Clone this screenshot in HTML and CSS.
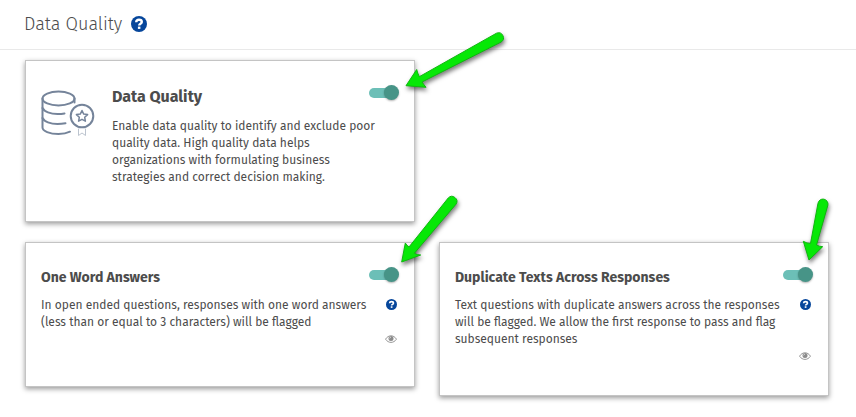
FILE: index.html
```
<!DOCTYPE html>
<html lang="en">
  <head>
    <meta charset="utf-8" />
    <title>Data Quality</title>
    <meta name="viewport" content="width=device-width, initial-scale=1.0" />
    <link rel="stylesheet" href="styles.css">
  </head>
  <body>
    <!-- shared icons -->
    <svg class="sprite" aria-hidden="true">
      <symbol id="help" viewBox="0 0 16 16">
        <circle cx="8" cy="8" r="8" fill="#06469b" />
        <path d="M5.200 6.200C5.300 4.500 6.500 3.800 8 3.800c1.600 0 2.800.8 2.800 2.200 0 1.900-2.600 1.700-2.600 3.500" fill="none" stroke="#fff" stroke-width="2.400" />
        <rect x="6.900" y="10.600" width="2.500" height="2.300" fill="#fff" />
      </symbol>
      <symbol id="eye" viewBox="0 0 12 8">
        <path d="M.5 4.200C2 1.900 3.900.8 6 .8s4 1.100 5.500 3.400C10 6.300 8.100 7.400 6 7.400S2 6.300.5 4.200z" fill="none" stroke="#8b8b8b" stroke-width=".9" />
        <circle cx="6" cy="3.600" r="2.500" fill="#8b8b8b" />
        <path d="M4.600 3.500c0-.8.6-1.400 1.400-1.400" fill="none" stroke="#fff" stroke-width=".6" />
      </symbol>
    </svg>

    <header class="page-header">
      <h1>Data Quality</h1>
      <button type="button" class="icon-btn" aria-label="Help">
        <svg width="16" height="16"><use href="#help" /></svg>
      </button>
    </header>

    <main class="cards">
      <section class="card card-main">
        <svg class="card-icon" width="54" height="48" viewBox="0 0 54 48" fill="none" stroke="#75849a" stroke-width="2" stroke-linecap="round">
          <ellipse cx="17.500" cy="8.500" rx="16" ry="7" />
          <path d="M1.500 8.500v29c0 3.500 7 6.500 16 6.500 4.500 0 8.500-.8 11.500-2.300" />
          <path d="M33.500 8.500v4" />
          <path d="M1.500 18c1.500 3.500 8 6 15 6 3 0 5-.2 7-.6" />
          <path d="M1.500 28c1.500 3.500 8 6 15 6 3 0 5.500-.3 8-.8" />
          <circle cx="41" cy="26" r="11.300" />
          <path d="M41 20.500l1.700 3.600 3.900.5-2.900 2.700.7 3.900-3.400-1.900-3.400 1.900.7-3.900-2.900-2.700 3.900-.5z" stroke-width="1.500" stroke-linejoin="round" />
          <path d="M37.500 39v6.500l3.500-2.500 3.500 2.500V39" stroke="#bcc4cf" stroke-width="1" />
        </svg>
        <div class="card-body">
          <h2><label for="dataQuality">Data Quality</label></h2>
          <p>
            Enable data quality to identify and exclude poor quality data. High
            quality data helps organizations with formulating business
            strategies and correct decision making.
          </p>
        </div>
        <input type="checkbox" class="toggle" id="dataQuality" checked />
        <svg class="arrow arrow-main" width="110" height="70" viewBox="0 0 110 70">
          <path d="M6 60.700L16.700 44.500Q17.500 48 19.300 51.700L96.500 8.200A5 5 0 0 1 101 17.100L22 57Q24 60 26 62.300Z" />
        </svg>
      </section>

      <section class="card">
        <h3><label for="oneWord">One Word Answers</label></h3>
        <input type="checkbox" class="toggle" id="oneWord" checked />
        <p>
          In open ended questions, responses with one word answers (less than
          or equal to 3 characters) will be flagged
        </p>
        <button type="button" class="icon-btn" aria-label="About one word answers">
          <svg width="11" height="11"><use href="#help" /></svg>
        </button>
        <button type="button" class="icon-btn preview" aria-label="Preview">
          <svg width="12" height="8"><use href="#eye" /></svg>
        </button>
        <svg class="arrow arrow-left" width="65" height="80" viewBox="0 0 65 80">
          <path d="M6.700 72L10.300 53Q12 55.500 14 57L53.200 8A5 5 0 0 1 61 14.200L19.300 63.300Q22 65 25.700 65Z" />
        </svg>
      </section>

      <section class="card">
        <h3><label for="duplicates">Duplicate Texts Across Responses</label></h3>
        <input type="checkbox" class="toggle" id="duplicates" checked />
        <p>
          Text questions with duplicate answers across the responses will be
          flagged. We allow the first response to pass and flag subsequent
          responses
        </p>
        <button type="button" class="icon-btn" aria-label="About duplicate texts">
          <svg width="11" height="11"><use href="#help" /></svg>
        </button>
        <button type="button" class="icon-btn preview" aria-label="Preview">
          <svg width="12" height="8"><use href="#eye" /></svg>
        </button>
        <svg class="arrow arrow-right" width="40" height="75" viewBox="0 0 40 75">
          <path d="M14 65L8.300 46.300Q12 48.500 15.500 48.500L23 8.200A5 5 0 0 1 32.900 10L21.500 50Q24 51.500 27.700 51.700Z" />
        </svg>
      </section>
    </main>
  </body>
</html>
```

FILE: styles.css
```
* {
  box-sizing: border-box;
}

body {
  font-family: "Fira Sans", Roboto, sans-serif;
  font-size: 12px;
  line-height: 17px;
  margin: 0;
  color: #4c4c4c;
  background-color: #fff;
}

h1,
h2,
h3,
p {
  margin: 0;
}

.sprite {
  position: absolute;
  width: 0;
  height: 0;
}

.page-header {
  display: flex;
  align-items: center;
  gap: 9px;
  height: 50px;
  padding: 0 24px 2px;
  border-bottom: 1px solid #e9e9e9;
}

h1 {
  font-size: 18px;
  font-weight: 300;
  line-height: 24px;
}

h2 {
  font-size: 16px;
  font-weight: 700;
  line-height: 20px;
  margin-bottom: 11px;
}

h3 {
  font-size: 14px;
  font-weight: 700;
  line-height: 20px;
}

.cards {
  display: grid;
  grid-template-columns: 1fr 1fr;
  align-items: start;
  gap: 20px 24px;
  padding: 10px 27px 20px 25px;
}

.card {
  position: relative;
  display: grid;
  grid-template-columns: 1fr 30px;
  align-content: start;
  column-gap: 2px;
  min-height: 145px;
  padding: 25px 15px 32px;
  border: 1px solid #c4c4c4;
  background: #fff;
  box-shadow: 0 2px 5px rgba(0, 0, 0, 0.4);
}

.card h3 {
  margin-bottom: 9px;
}

.card-main {
  display: flex;
  gap: 17px;
  min-height: 162px;
}

/* keep the first card alone on its row */
.card-main + .card {
  grid-column-start: 1;
}

.card-icon {
  flex: none;
  margin-top: 4px;
}

.card-body {
  flex: 1;
  margin-right: -24px;
  padding-top: 1px;
}

.icon-btn {
  display: flex;
  align-items: center;
  padding: 0;
  border: none;
  background: none;
  cursor: pointer;
}

.card .icon-btn {
  align-self: start;
  justify-self: end;
  height: 15px;
  margin-right: 2px;
}

.card .preview {
  grid-column: 2;
}

.toggle {
  appearance: none;
  position: relative;
  flex: none;
  width: 30px;
  height: 15px;
  margin: -1px 0 0;
  cursor: pointer;
}

.toggle::before {
  content: "";
  position: absolute;
  top: 3px;
  left: 0;
  width: 28px;
  height: 10px;
  border-radius: 5px;
  background: #6cbfb7;
}

.toggle::after {
  content: "";
  position: absolute;
  top: 0;
  left: 0;
  width: 15px;
  height: 15px;
  border-radius: 50%;
  background: #479487;
  box-shadow: 0 1px 2px rgba(0, 0, 0, 0.3);
}

.toggle:checked::after {
  left: 15px;
}

.arrow {
  position: absolute;
  z-index: 1;
  overflow: visible;
  pointer-events: none;
  fill: #06e806;
  stroke: #10b510;
  stroke-width: 1;
  stroke-linejoin: round;
  filter: drop-shadow(1px 3px 2px rgba(0, 0, 0, 0.5));
}

.arrow-main {
  top: -36px;
  right: -96px;
}

.arrow-left {
  top: -53px;
  right: -46px;
}

.arrow-right {
  top: -48px;
  right: -7px;
}
```
